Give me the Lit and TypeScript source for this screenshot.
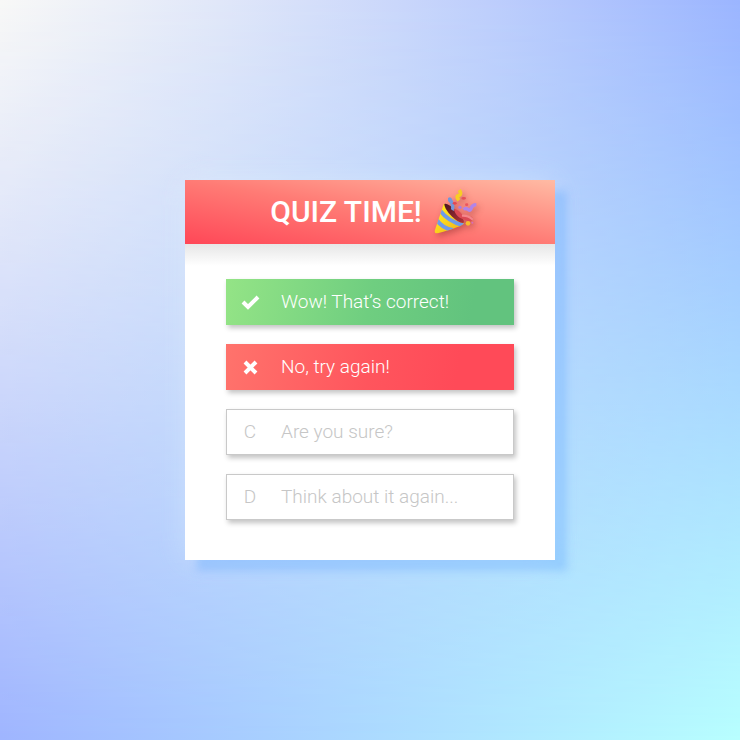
import { LitElement, html, css, svg } from "lit";
import { customElement, property } from "lit/decorators.js";

type Status = "correct" | "wrong" | "idle";

interface Answer {
  letter: string;
  text: string;
  status: Status;
}

const ANSWERS: Answer[] = [
  { letter: "A", text: "Wow! That’s correct!", status: "correct" },
  { letter: "B", text: "No, try again!", status: "wrong" },
  { letter: "C", text: "Are you sure?", status: "idle" },
  { letter: "D", text: "Think about it again...", status: "idle" },
];

const check = svg`<path d="M2 9 L7 14 L17 4" fill="none" stroke="#fff" stroke-width="4"/>`;
const cross = svg`<path d="M4 4 L15 15 M15 4 L4 15" fill="none" stroke="#fff" stroke-width="4"/>`;

@customElement("quiz-option")
export class QuizOption extends LitElement {
  @property({ attribute: false }) answer!: Answer;

  static styles = css`
    :host {
      display: block;
    }
    .option {
      box-sizing: border-box;
      display: grid;
      grid-template-columns: 46px 1fr;
      align-items: center;
      column-gap: 8px;
      width: 100%;
      height: 46px;
      margin: 0;
      padding: 0;
      border: 1px solid #c9c9c9;
      background: #fff;
      box-shadow: 2px 3px 5px rgba(0, 0, 0, 0.24);
      color: #c6c6c6;
      font: 300 19px/24px "Roboto", sans-serif;
      text-align: left;
      cursor: pointer;
    }
    .correct,
    .wrong {
      border-color: transparent;
      background-origin: border-box;
      color: #fff;
    }
    .correct {
      background-image: linear-gradient(100deg, #94e486, #6fce80 50%, #62c37e 85%);
    }
    .wrong {
      background-image: linear-gradient(100deg, #ff736c, #ff555d 50%, #ff4a58 80%);
    }
    .mark {
      display: flex;
      justify-content: center;
    }
  `;

  render() {
    const { letter, text, status } = this.answer;
    return html`
      <button class="option ${status}" type="button">
        <span class="mark">
          ${status === "idle"
            ? letter
            : html`<svg width="19" height="19" viewBox="0 0 19 19" aria-hidden="true">
                ${status === "correct" ? check : cross}
              </svg>`}
        </span>
        <span>${text}</span>
      </button>
    `;
  }
}

@customElement("party-popper")
export class PartyPopper extends LitElement {
  static styles = css`
    :host {
      display: block;
      filter: drop-shadow(2px 3px 3px rgba(120, 30, 30, 0.4));
    }
    svg {
      display: block;
    }
  `;

  render() {
    return html`
      <svg width="44" height="47" viewBox="24 18 132 141" aria-hidden="true">
        <defs>
          <linearGradient id="cone" x1="0" y1="0" x2="1" y2="1">
            <stop offset="0.3" stop-color="#ffe51c" />
            <stop offset="1" stop-color="#eda61d" />
          </linearGradient>
          <linearGradient id="mouth" x1="0" y1="0" x2="1" y2="1">
            <stop offset="0" stop-color="#4a1522" />
            <stop offset="1" stop-color="#b5323b" />
          </linearGradient>
          <clipPath id="shell">
            <path d="M54 61 Q80 92 115 121 Q106 132 35 151 Q25 152 26 143 Z" />
          </clipPath>
        </defs>
        <g clip-path="url(#shell)">
          <rect x="20" y="55" width="100" height="100" fill="url(#cone)" />
          <path d="M42 82 Q66 115 112 127" fill="none" stroke="#6f9be8" stroke-width="12" />
          <path d="M31 109 Q48 135 80 141" fill="none" stroke="#6f9be8" stroke-width="12" />
        </g>
        <path d="M55 63 Q65 59 93 85 Q118 110 113 120 Q101 123 77 100 Q54 76 55 63 Z" fill="url(#mouth)" />
        <path d="M66 45 Q75 38 79 50 Q89 70 83 84 L75 79 Q77 62 66 54 Z" fill="#7496da" />
        <path d="M83 78 Q99 78 111 99 L137 101 Q145 108 133 116 Q116 111 101 104 Q89 98 83 78 Z" fill="#dc4a54" />
        <path d="M111 98 Q127 98 138 108" fill="none" stroke="#f4868b" stroke-width="7" stroke-linecap="round" />
        <path d="M100 21 Q108 35 98 38 Q88 40 99 52" fill="none" stroke="#f7cd25" stroke-width="11" />
        <path d="M113 80 Q119 73 127 80 Q134 85 136 75 Q139 65 151 65" fill="none" stroke="#b184e9" stroke-width="10" />
        <circle cx="102" cy="73" r="5" fill="#a87fe0" />
        <ellipse cx="86" cy="61" rx="6" ry="4" fill="#e34753" />
        <ellipse cx="113" cy="46" rx="7" ry="4" fill="#e64f58" />
        <ellipse cx="122" cy="65" rx="5" ry="4" fill="#ed565f" />
        <circle cx="126" cy="121" r="7" fill="#f6bd2b" />
        <circle cx="139" cy="119" r="3" fill="#d86fbb" />
      </svg>
    `;
  }
}

@customElement("app-root")
export class AppRoot extends LitElement {
  static styles = css`
    :host {
      display: flex;
      align-items: center;
      justify-content: center;
      position: relative;
      isolation: isolate;
      box-sizing: border-box;
      min-height: 100vh;
      padding: 24px;
      background: linear-gradient(to right, #9fb5ff, #b8ffff);
    }
    /* The upper edge's colours fade down into the lower edge's. */
    :host::before {
      content: "";
      position: absolute;
      inset: 0;
      z-index: -1;
      background: linear-gradient(to right, #f8f8f7, 54%, #9bb5ff);
      mask-image: linear-gradient(to bottom, #000, 54%, transparent);
    }
    .card {
      width: 100%;
      max-width: 370px;
      background: #fff;
      box-shadow:
        12px 11px 8px rgba(90, 165, 255, 0.34),
        0 0 28px rgba(225, 240, 255, 0.4);
    }
    .header {
      display: flex;
      align-items: center;
      justify-content: center;
      gap: 12px;
      box-sizing: border-box;
      height: 64px;
      padding-left: 8px;
      background: linear-gradient(to top right, #ff4757, #ff7b75 50%, #ffbba4);
    }
    .title {
      margin: 0;
      color: #fff;
      font: 500 30px/40px "Roboto", sans-serif;
    }
    .answers {
      display: grid;
      gap: 19px;
      margin: 0;
      padding: 35px 41px 40px;
      list-style: none;
      background: linear-gradient(#e6e6e6, #fff 22px);
    }
  `;

  render() {
    return html`
      <main class="card">
        <header class="header">
          <h1 class="title">QUIZ TIME!</h1>
          <party-popper></party-popper>
        </header>
        <ul class="answers">
          ${ANSWERS.map((a) => html`<li><quiz-option .answer=${a}></quiz-option></li>`)}
        </ul>
      </main>
    `;
  }
}
